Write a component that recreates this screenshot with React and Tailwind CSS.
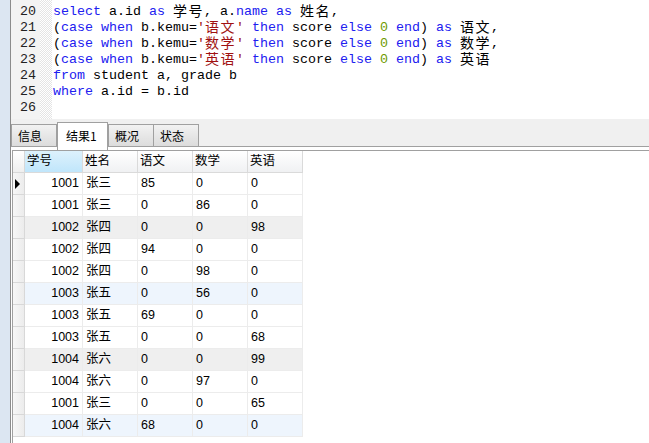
const mono = { fontFamily: '"Liberation Mono", "Noto Sans CJK SC", monospace' };
const cjk = { fontFamily: '"Noto Sans CJK SC", sans-serif' };

const lines = [
    [["k", "select"], ["p", " a.id "], ["k", "as"], ["p", " "], ["c", "学号"], ["p", ", a."], ["k", "name"], ["p", " "], ["k", "as"], ["p", " "], ["c", "姓名"], ["p", ","]],
    [["p", "("], ["k", "case when"], ["p", " b.kemu="], ["s", "'"], ["sc", "语文"], ["s", "'"], ["p", " "], ["k", "then"], ["p", " score "], ["k", "else"], ["p", " "], ["n", "0"], ["p", " "], ["k", "end"], ["p", ") "], ["k", "as"], ["p", " "], ["c", "语文"], ["p", ","]],
    [["p", "("], ["k", "case when"], ["p", " b.kemu="], ["s", "'"], ["sc", "数学"], ["s", "'"], ["p", " "], ["k", "then"], ["p", " score "], ["k", "else"], ["p", " "], ["n", "0"], ["p", " "], ["k", "end"], ["p", ") "], ["k", "as"], ["p", " "], ["c", "数学"], ["p", ","]],
    [["p", "("], ["k", "case when"], ["p", " b.kemu="], ["s", "'"], ["sc", "英语"], ["s", "'"], ["p", " "], ["k", "then"], ["p", " score "], ["k", "else"], ["p", " "], ["n", "0"], ["p", " "], ["k", "end"], ["p", ") "], ["k", "as"], ["p", " "], ["c", "英语"]],
    [["k", "from"], ["p", " student a, grade b"]],
    [["k", "where"], ["p", " a.id = b.id"]],
    [],
];

const rows = [
    ["1001", "张三", "85", "0", "0", ""],
    ["1001", "张三", "0", "86", "0", ""],
    ["1002", "张四", "0", "0", "98", "gray"],
    ["1002", "张四", "94", "0", "0", ""],
    ["1002", "张四", "0", "98", "0", ""],
    ["1003", "张五", "0", "56", "0", "blue"],
    ["1003", "张五", "69", "0", "0", ""],
    ["1003", "张五", "0", "0", "68", ""],
    ["1004", "张六", "0", "0", "99", "gray"],
    ["1004", "张六", "0", "97", "0", ""],
    ["1001", "张三", "0", "0", "65", ""],
    ["1004", "张六", "68", "0", "0", "blue"],
];

function Token({ type, text }) {
    if (type === "k") return <span className="text-[#2020f0]">{text}</span>;
    if (type === "s") return <span className="text-[#a01010]">{text}</span>;
    if (type === "n") return <span className="text-[#6e9a00]">{text}</span>;
    if (type === "sc") {
        return (
            <span className="inline-block align-top relative -top-[2px] h-[16px] text-[#a01010] text-[14px] tracking-[1.5px] leading-[16px]" style={cjk}>
                {text}
            </span>
        );
    }
    if (type === "c") {
        return (
            <span className="inline-block align-top relative -top-[2px] h-[16px] text-[14px] tracking-[1.5px] leading-[16px]" style={cjk}>
                {text}
            </span>
        );
    }
    return <span>{text}</span>;
}

function Tab({ label, active }) {
    if (active) {
        return (
            <div className="w-[51px] h-[28px] -mb-[4px] bg-white border border-b-0 border-[#a0a0a0] flex items-start pt-[4px] pl-[8px] relative z-10">
                {label}
            </div>
        );
    }
    return (
        <div className="w-[46px] h-[22px] bg-gradient-to-b from-[#f2f2f2] to-[#dcdcdc] border border-b-0 border-[#a0a0a0] flex items-center pl-[6px]">
            {label}
        </div>
    );
}

export default function App() {
    const widths = ["w-[58px]", "w-[55px]", "w-[55px]", "w-[55px]", "w-[55px]"];

    return (
        <div className="w-[649px] h-[443px] flex overflow-hidden bg-white">

            <div className="w-[10px] bg-[#dce6f2] shrink-0" />
            <div className="w-px bg-[#8c8c8c] shrink-0" />

            <div className="flex-1 flex flex-col min-w-0">

                {/* sql editor */}
                <div className="h-[119px] flex shrink-0 text-[13.33px]" style={mono}>
                    <div className="w-[29px] bg-[#f3f3f3] pt-[4px] pr-[4px] text-right text-[#222]">
                        {lines.map((_, i) => (
                            <div key={i} className="h-[16px] leading-[16px]">
                                {20 + i}
                            </div>
                        ))}
                    </div>
                    <div className="w-[12px] bg-[repeating-conic-gradient(#e4e4e4_0%_25%,#ffffff_0%_50%)] bg-[length:2px_2px]" />
                    <div className="flex-1 pt-[4px] pl-px text-black whitespace-pre">
                        {lines.map((line, i) => (
                            <div key={i} className="h-[16px] leading-[16px]">
                                {line.map(([t, text], j) => (
                                    <Token key={j} type={t} text={text} />
                                ))}
                            </div>
                        ))}
                    </div>
                </div>

                {/* tabs */}
                <div
                    className="h-[28px] bg-[#f0f0f0] flex items-end shrink-0 text-[12px] text-black border-b border-[#a0a0a0]"
                    style={{ fontFamily: '"Noto Sans CJK SC", "Liberation Sans", sans-serif' }}
                >
                    <Tab label="信息" />
                    <Tab label="结果1" active />
                    <Tab label="概况" />
                    <div className="-ml-px">
                        <Tab label="状态" />
                    </div>
                </div>

                {/* result grid */}
                <div className="flex-1 pt-[3px] pl-px">
                    <div
                        className="border-t border-l border-[#a0a0a0] text-[12.5px] text-black h-full"
                        style={{ fontFamily: '"Liberation Sans", "Noto Sans CJK SC", sans-serif' }}
                    >
                        <div className="flex h-[22px]">
                            <div className="w-[12px] bg-gradient-to-b from-[#ffffff] to-[#efefef] border-r border-b border-[#d8d8d8]" />
                            {["学号", "姓名", "语文", "数学", "英语"].map((h, i) => (
                                <div
                                    key={h}
                                    className={`${widths[i]} flex items-center pl-[2px] border-r border-b border-[#dadada] ${
                                        i === 0
                                            ? "bg-gradient-to-b from-[#ddf1fc] to-[#c0e6fb]"
                                            : "bg-gradient-to-b from-[#ffffff] to-[#f0f1f3]"
                                    }`}
                                >
                                    {h}
                                </div>
                            ))}
                        </div>

                        {rows.map((r, idx) => {
                            const bg =
                                r[5] === "gray" ? "bg-[#efefef]" : r[5] === "blue" ? "bg-[#eef5fd]" : "bg-white";
                            return (
                                <div key={idx} className={`flex h-[22px] ${bg} w-fit`}>
                                    <div className="w-[12px] bg-gradient-to-r from-[#f7f7f7] to-[#ececec] border-r border-b border-[#d8d8d8] flex items-center pl-[2px]">
                                        {idx === 0 && (
                                            <div className="w-0 h-0 border-y-[5px] border-y-transparent border-l-[5px] border-l-black" />
                                        )}
                                    </div>
                                    <div className={`${widths[0]} flex items-center justify-end pr-[3px] border-r border-b border-[#ececec]`}>
                                        {r[0]}
                                    </div>
                                    <div className={`${widths[1]} flex items-center pl-[3px] border-r border-b border-[#ececec]`}>
                                        {r[1]}
                                    </div>
                                    {[2, 3, 4].map((c) => (
                                        <div
                                            key={c}
                                            className={`${widths[c]} flex items-center pl-[3px] border-r border-b border-[#ececec]`}
                                        >
                                            {r[c]}
                                        </div>
                                    ))}
                                </div>
                            );
                        })}
                    </div>
                </div>

            </div>
        </div>
    );
}
